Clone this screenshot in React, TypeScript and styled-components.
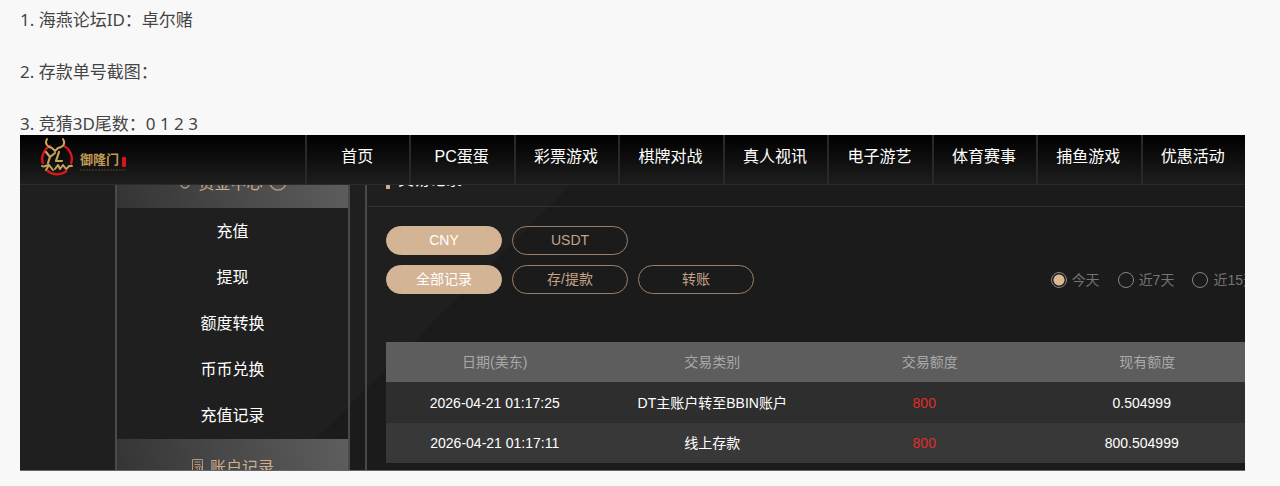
import React from 'react';
import styled, { createGlobalStyle } from 'styled-components';

const Global = createGlobalStyle`
  *, *::before, *::after { box-sizing: border-box; }
  body { margin: 0; background: #f8f8f8; font-family: "Liberation Sans", "Noto Sans CJK SC", sans-serif; }
  button, input { font: inherit; margin: 0; }
`;

const Post = styled.article`
  padding: 8px 35px 15px 20px;
`;

const Line = styled.p`
  margin: 0 0 28px;
  font: 17px/24px "Noto Sans", "Noto Sans CJK SC", sans-serif;
  color: #444;
  &:last-of-type { margin-bottom: 0; height: 23px; }
`;

const Panel = styled.section`
  overflow: hidden;
  color: #fff;
  background:
    linear-gradient(135deg, #1f1f1f 50%, #1b1b1b 50%) 0 0 / 600px 600px no-repeat,
    #1b1b1b;
  border-bottom: 1px solid #666;
`;

const Header = styled.header`
  display: flex;
  height: 50px;
  background: linear-gradient(#000, #1e1e1e);
  border-bottom: 1px solid #2b2b2b;
`;

const Brand = styled.a`
  flex: 0 0 285px;
  padding-left: 19px;
  display: flex;
  align-items: flex-start;
`;

const Nav = styled.nav`
  flex: 1;
  display: grid;
  grid-template-columns: repeat(9, 1fr);
`;

const NavLink = styled.a`
  padding-right: 2px;
  border-left: 2px solid #292929;
  text-align: center;
  font-size: 16px;
  line-height: 43px;
  color: #fff;
  text-decoration: none;
  white-space: nowrap;
`;

const Body = styled.div`
  display: flex;
  height: 285px;
  padding-left: 95px;
`;

const Sidebar = styled.aside`
  flex: 0 0 235px;
  border: 2px solid #4a4a4a;
  border-width: 0 2px;
  overflow: hidden;
`;

const GroupTitle = styled.h2<{ $clipped?: boolean }>`
  margin: 0;
  height: 53px;
  margin-top: ${(p) => (p.$clipped ? '-30px' : '0')};
  display: flex;
  align-items: center;
  justify-content: center;
  gap: 6px;
  font-size: 16px;
  font-weight: 400;
  color: #cfae90;
  background: linear-gradient(75deg, #343434, #5e5e5e);
`;

const Menu = styled.ul`
  margin: 0;
  padding: 1px 0 0;
  list-style: none;
`;

const MenuLink = styled.a`
  display: block;
  height: 46px;
  line-height: 46px;
  text-align: center;
  font-size: 16px;
  color: #fff;
  text-decoration: none;
`;

const Content = styled.main`
  flex: 1;
  min-width: 0;
  margin-left: 15px;
  border-left: 2px solid #484848;
  overflow: hidden;
`;

const Title = styled.h1`
  margin: -30px 0 0;
  height: 52px;
  padding: 10px 0 0 19px;
  display: flex;
  align-items: flex-start;
  gap: 8px;
  font-size: 16px;
  line-height: 30px;
  font-weight: 400;
  border-bottom: 1px solid #33302d;
  &::before { content: ""; width: 4px; height: 24px; background: #cfae90; }
`;

const Filters = styled.div`
  padding: 19px 0 0 19px;
  display: grid;
  gap: 10px;
`;

const FilterRow = styled.div`
  display: flex;
  align-items: center;
  gap: 10px;
`;

const Pill = styled.button<{ $active?: boolean }>`
  flex: 0 0 116px;
  height: 29px;
  padding: 0 0 1px;
  border: 1px solid ${(p) => (p.$active ? '#d3b495' : '#9a806a')};
  border-radius: 15px;
  background: ${(p) => (p.$active ? '#d3b495' : 'transparent')};
  color: ${(p) => (p.$active ? '#fff' : '#c3a489')};
  font-size: 14px;
  line-height: 26px;
`;

const Periods = styled.div`
  margin: 0 -12px 0 auto;
  display: flex;
  gap: 18px;
`;

const Period = styled.label`
  display: flex;
  align-items: center;
  gap: 5px;
  font-size: 14px;
  line-height: 20px;
  color: #757575;
  white-space: nowrap;
`;

const Radio = styled.input`
  appearance: none;
  width: 16px;
  height: 16px;
  border: 1px solid #858585;
  border-radius: 50%;
  &:checked { background: radial-gradient(circle, #dbb892 5px, transparent 6px); }
`;

const Records = styled.table`
  margin: 48px 0 0 19px;
  width: calc(100% - 8px);
  table-layout: fixed;
  border-collapse: collapse;
  font-size: 14px;
  line-height: 20px;
  text-align: center;
`;

const HeadRow = styled.tr`
  height: 40px;
  background: #5d5d5d;
  color: #a9a9a9;
`;

const Row = styled.tr`
  height: 41px;
  background: #2e2e2e;
  &:nth-child(even) { background: #383838; height: 40px; }
`;

const Th = styled.th`
  padding: 0;
  font-weight: 400;
`;

const Cell = styled.td<{ $red?: boolean; $amount?: boolean }>`
  padding: 0 ${(p) => (p.$amount ? '11px' : '0')} 0 0;
  color: ${(p) => (p.$red ? '#e02c2c' : '#fff')};
`;

const nav = ['首页', 'PC蛋蛋', '彩票游戏', '棋牌对战', '真人视讯', '电子游艺', '体育赛事', '捕鱼游戏', '优惠活动'];
const menu = ['充值', '提现', '额度转换', '币币兑换', '充值记录'];
const records = [
  ['2026-04-21 01:17:25', 'DT主账户转至BBIN账户', '800', '0.504999'],
  ['2026-04-21 01:17:11', '线上存款', '800', '800.504999'],
];

const Logo = () => (
  <svg width="92" height="44" viewBox="0 0 92 44" role="img" aria-label="御隆门">
    <path d="M12 10.500A15 15 0 0 0 4 29M24 10.500A15 15 0 0 1 32 29M8 35.500a15 15 0 0 0 20 0" fill="none" stroke="#d9141b" strokeWidth="2.4" />
    <g fill="none" stroke="#c8a35c" strokeLinecap="round" strokeLinejoin="round">
      <path d="M8 4c-3 5 1 8 5 9l3 3 3-3c5-1 8-4 5-9" strokeWidth="2" />
      <path d="M7 17l4 5 5-4M11 22l-2 6M20 17l-3 9h6" strokeWidth="2.2" />
      <path d="M3 31c3 2 5-2 7-1l4 5M10 30l-3 5M16 34l3-4 2 4 3-4 3 4c2 0 1-4 6-3" strokeWidth="2" />
    </g>
    <text x="41" y="29" fontSize="13" fontWeight="700" fill="#bf9a55" fontFamily="Noto Sans CJK SC, sans-serif">御隆门</text>
    <rect x="83" y="22" width="4" height="10" rx="1" fill="#d9141b" />
    <path d="M41 35h46" stroke="#54462b" strokeDasharray="2 1" />
  </svg>
);

const CoinIcon = () => (
  <svg width="14" height="14" viewBox="0 0 14 14" fill="none" stroke="#b3967c" strokeWidth="1.5" aria-hidden="true">
    <circle cx="7" cy="5" r="4" /><circle cx="7" cy="9" r="4" />
  </svg>
);

const RingIcon = () => (
  <svg width="18" height="18" viewBox="0 0 18 18" fill="none" stroke="#b3967c" strokeWidth="1.5" aria-hidden="true">
    <circle cx="9" cy="9" r="8" /><path d="M5 8l4 3 4-3" />
  </svg>
);

const LedgerIcon = () => (
  <svg width="13" height="15" viewBox="0 0 13 15" fill="none" stroke="#b3967c" aria-hidden="true">
    <path d="M1.500 14V1.500h10V14M3.500 4h6M3.500 6.500h6M3.500 9h3M1 14h11" />
    <circle cx="8.500" cy="10.500" r="2.500" /><path d="M8.500 9v3" />
  </svg>
);

export default function App() {
  return (
    <>
      <Global />
      <Post>
        <Line>1. 海燕论坛ID：卓尔赌</Line>
        <Line>2. 存款单号截图：</Line>
        <Line>3. 竞猜3D尾数：0 1 2 3</Line>
        <Panel>
          <Header>
            <Brand href="#"><Logo /></Brand>
            <Nav>{nav.map((n) => <NavLink href="#" key={n}>{n}</NavLink>)}</Nav>
          </Header>
          <Body>
            <Sidebar>
              <GroupTitle $clipped><CoinIcon />资金中心<RingIcon /></GroupTitle>
              <Menu>{menu.map((m) => <li key={m}><MenuLink href="#">{m}</MenuLink></li>)}</Menu>
              <GroupTitle><LedgerIcon />账户记录</GroupTitle>
            </Sidebar>
            <Content>
              <Title>交易记录</Title>
              <Filters>
                <FilterRow><Pill type="button" $active>CNY</Pill><Pill type="button">USDT</Pill></FilterRow>
                <FilterRow>
                  <Pill type="button" $active>全部记录</Pill>
                  <Pill type="button">存/提款</Pill>
                  <Pill type="button">转账</Pill>
                  <Periods>
                    {['今天', '近7天', '近15天'].map((p, i) => (
                      <Period key={p}><Radio type="radio" name="period" defaultChecked={i === 0} />{p}</Period>
                    ))}
                  </Periods>
                </FilterRow>
              </Filters>
              <Records>
                <thead>
                  <HeadRow>{['日期(美东)', '交易类别', '交易额度', '现有额度'].map((h) => <Th key={h} scope="col">{h}</Th>)}</HeadRow>
                </thead>
                <tbody>
                  {records.map((r) => (
                    <Row key={r[0]}>{r.map((c, i) => <Cell key={i} $red={i === 2} $amount={i > 1}>{c}</Cell>)}</Row>
                  ))}
                </tbody>
              </Records>
            </Content>
          </Body>
        </Panel>
      </Post>
    </>
  );
}
